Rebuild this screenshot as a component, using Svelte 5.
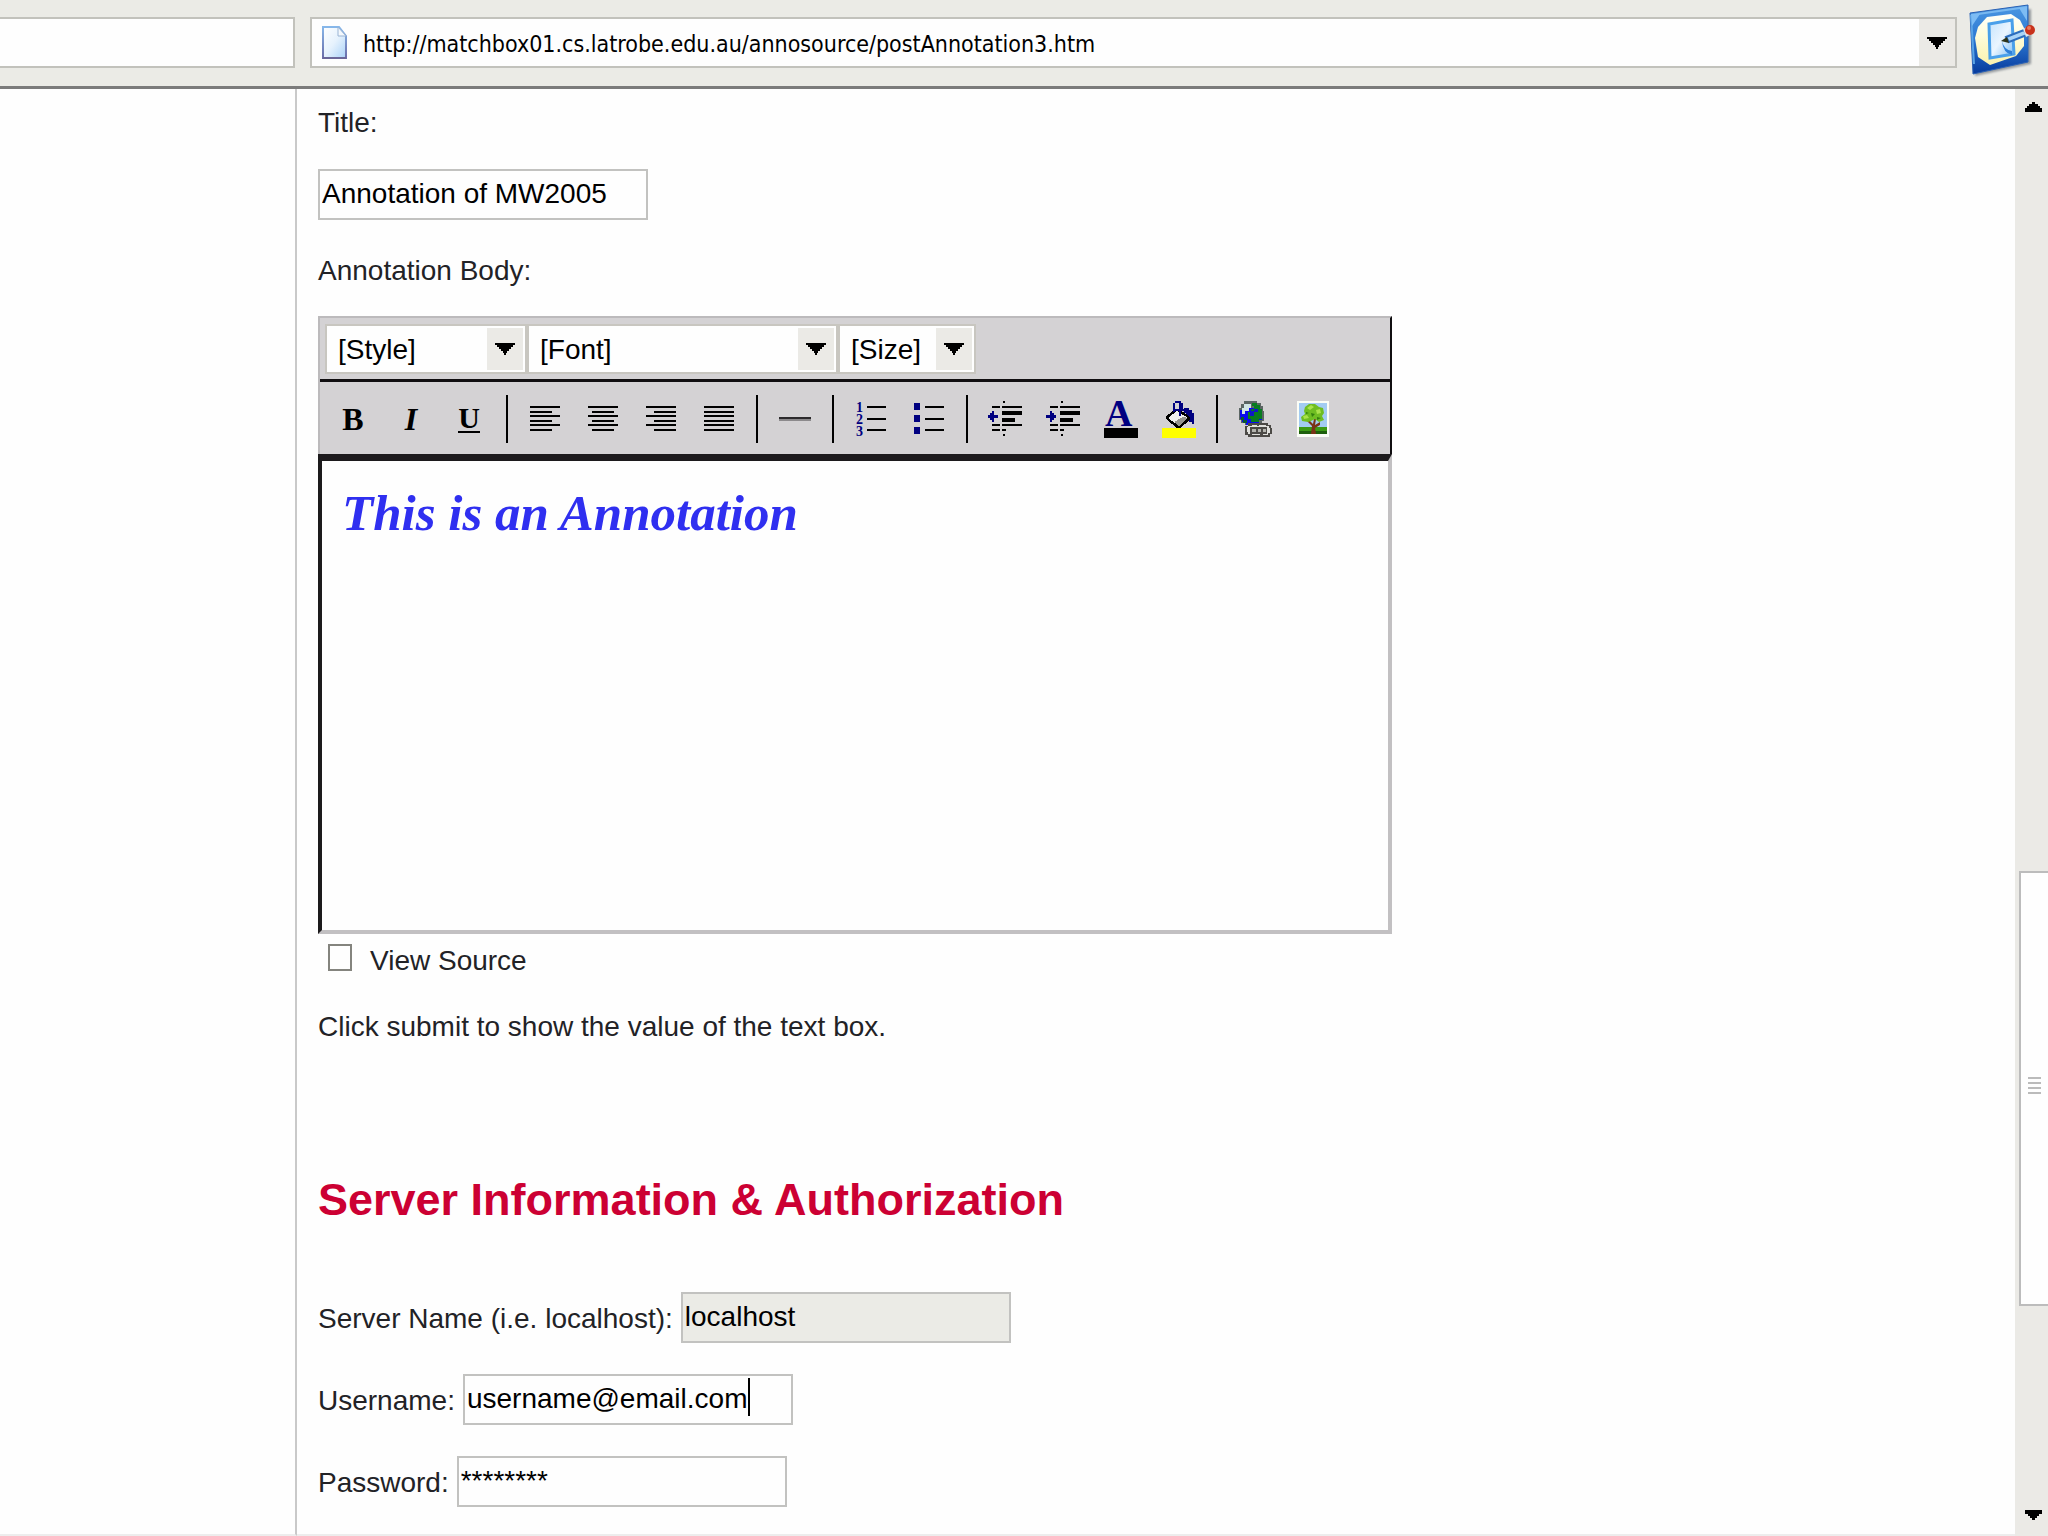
<script>
  let address = $state('http://matchbox01.cs.latrobe.edu.au/annosource/postAnnotation3.htm');
  let title = $state('Annotation of MW2005');
  let server = $state('localhost');
  let username = $state('username@email.com');
  let password = $state('********');
  let viewSource = $state(false);

  const lines = [0, 5, 9, 14, 18, 23];
</script>

{#snippet paragraphIcon(kind)}
  <svg width="30" height="26" viewBox="0 0 30 26" shape-rendering="crispEdges" aria-hidden="true">
    {#each lines as y, i}
      {@const w = kind === 'justify' || i % 2 === 0 ? 30 : 22}
      <rect x={kind === 'left' || w === 30 ? 0 : kind === 'center' ? 4 : 8} {y} width={w} height="2" />
    {/each}
  </svg>
{/snippet}

{#snippet dentIcon(kind)}
  <svg width="36" height="36" viewBox="0 0 36 36" shape-rendering="crispEdges" aria-hidden="true">
    <path d="M16 0h2v2h-2zM5 5h8v2H5zM15 5h20v2H15zM15 10h20v4H15zM15 17h13v4H15zM5 23h8v2H5zM15 23h20v2H15zM5 28h8v2H5zM15 28h4v2h-4zM16 33h2v2h-2z" />
    {#if kind === 'out'}
      <path fill="#000080" d="M1 14h2v-2h2v-2h2v4h4v3H7v4H5v-2H3v-2H1z" />
    {:else}
      <path fill="#000080" d="M11 14H9v-2H7v-2H5v4H1v3h4v4h2v-2h2v-2h2z" />
    {/if}
  </svg>
{/snippet}

{#snippet arrow()}
  <svg width="20" height="12" viewBox="0 0 20 12" shape-rendering="crispEdges" aria-hidden="true">
    <path d="M0 0h20v2h-2v2h-2v2h-2v2h-2v2h-1v2H9v-2H8V8H6V6H4V4H2V2H0z" />
  </svg>
{/snippet}

<div class="window">
  <header class="bar">
    <div class="stub"></div>
    <div class="address">
      <svg class="page-icon" width="26" height="34" viewBox="0 0 26 34" aria-hidden="true">
        <defs>
          <linearGradient id="sheet" x1="0" y1="0" x2="1" y2="1">
            <stop offset="0" stop-color="#fff" />
            <stop offset=".5" stop-color="#e6f2fd" />
            <stop offset="1" stop-color="#a9d2f8" />
          </linearGradient>
          <linearGradient id="edge" x1="0" y1="0" x2="0" y2="1">
            <stop offset="0" stop-color="#86b7ea" />
            <stop offset="1" stop-color="#6a6ca8" />
          </linearGradient>
        </defs>
        <path d="M1 1h16l7 9v22H1z" fill="url(#sheet)" stroke="url(#edge)" stroke-width="2" />
        <path d="M16 1v9h8z" fill="#f4f8fc" stroke="#9ab4d4" />
        <path d="M1 32h23" stroke="#6b6799" stroke-width="2" />
      </svg>
      <input class="url" type="text" aria-label="Address" bind:value={address} />
      <button class="drop" aria-label="Show addresses">{@render arrow()}</button>
    </div>
    <button class="annotate" aria-label="Annotate">
      <svg width="68" height="74" viewBox="0 0 68 74" aria-hidden="true">
        <defs>
          <linearGradient id="frame" x1="0" y1="0" x2="0" y2="1">
            <stop offset="0" stop-color="#4b97e2" />
            <stop offset=".5" stop-color="#2c78d2" />
            <stop offset="1" stop-color="#063a9c" />
          </linearGradient>
          <linearGradient id="disc" x1="0" y1="0" x2="0" y2="1">
            <stop offset="0" stop-color="#fffffa" />
            <stop offset=".4" stop-color="#fffcdc" />
            <stop offset="1" stop-color="#fbf2ae" />
          </linearGradient>
          <linearGradient id="note" x1="0" y1="0" x2="1" y2="1">
            <stop offset="0" stop-color="#c4e3fc" />
            <stop offset=".5" stop-color="#eaf5ff" />
            <stop offset="1" stop-color="#7dbdf3" />
          </linearGradient>
          <filter id="soft" x="-10%" y="-10%" width="120%" height="120%">
            <feGaussianBlur stdDeviation="1" />
          </filter>
        </defs>
        <path d="M6 13 62 5v55L6 72z" fill="#6d757e" opacity=".7" filter="url(#soft)" />
        <path d="M1 9 59 1v57L4 70z" fill="url(#frame)" stroke="#2b62b4" />
        <path d="M2 11 58 3" stroke="#79b8f0" stroke-width="2" />
        <path d="M2 11 5 60" stroke="#5aa4e6" stroke-width="2" />
        <path d="M50 4 58 3v14z" fill="#7dbcf4" />
        <path d="M2 10h9l-8 12z" fill="#7dbcf4" />
        <path d="M18 13 42 10 51 16 55 24 55 42 47 52 21 61 9 53 6 34 9 23z" fill="url(#disc)" />
        <path d="M20 20 43 16 45 50 21 54z" fill="url(#note)" stroke="#4aa0ea" stroke-width="3" />
        <path d="M33 37q2 9 10 10v4q-9-2-10-14z" fill="#2f80d8" />
        <path d="M37 33 55 26 58 31 40 38z" fill="#a9d4f8" stroke="#2c6dbd" stroke-width="2" />
        <path d="m32 37 6-4 2 6z" fill="#2d3318" />
        <path d="m54 25 4-2 3 8-4 2z" fill="#e0e4ea" />
        <circle cx="61" cy="26" r="5" fill="#c8321c" />
        <circle cx="60" cy="24" r="2" fill="#ee7a5c" />
      </svg>
    </button>
  </header>

  <div class="view">
    <aside class="side"></aside>
    <main class="content">
      <label class="line" for="title">Title:</label>
      <input class="field" id="title" type="text" bind:value={title} />
      <p class="line body-label" id="body-label">Annotation Body:</p>

      <div class="editor">
        <div class="tools">
          <div class="selects">
            <div class="select style">
              <select aria-label="Style"><option>[Style]</option></select>
              <span class="drop">{@render arrow()}</span>
            </div>
            <div class="select font">
              <select aria-label="Font"><option>[Font]</option></select>
              <span class="drop">{@render arrow()}</span>
            </div>
            <div class="select size">
              <select aria-label="Size"><option>[Size]</option></select>
              <span class="drop">{@render arrow()}</span>
            </div>
          </div>
          <div class="buttons">
            <button class="tool letter" aria-label="Bold">B</button>
            <button class="tool letter italic" aria-label="Italic">I</button>
            <button class="tool letter" aria-label="Underline"><span class="under">U</span></button>
            <span class="sep"></span>
            <button class="tool" aria-label="Align left">{@render paragraphIcon('left')}</button>
            <button class="tool" aria-label="Align center">{@render paragraphIcon('center')}</button>
            <button class="tool" aria-label="Align right">{@render paragraphIcon('right')}</button>
            <button class="tool" aria-label="Justify">{@render paragraphIcon('justify')}</button>
            <span class="sep"></span>
            <button class="tool" aria-label="Horizontal rule">
              <svg width="32" height="4" viewBox="0 0 32 4" shape-rendering="crispEdges" aria-hidden="true">
                <rect width="32" height="4" fill="#8c8a8c" />
                <rect width="32" height="2" fill="#2c2a2c" />
              </svg>
            </button>
            <span class="sep"></span>
            <button class="tool" aria-label="Numbered list">
              <svg width="32" height="36" viewBox="0 0 32 36" aria-hidden="true">
                <g class="digits">
                  <text x="1" y="11">1</text>
                  <text x="1" y="23">2</text>
                  <text x="1" y="35">3</text>
                </g>
                <path shape-rendering="crispEdges" d="M12 5h19v2H12zM12 17h19v2H12zM12 28h19v2H12z" />
              </svg>
            </button>
            <button class="tool" aria-label="Bulleted list">
              <svg width="30" height="32" viewBox="0 0 30 32" shape-rendering="crispEdges" aria-hidden="true">
                <path fill="#000080" d="M0 0h6v7H0zM0 12h6v7H0zM0 24h6v7H0z" />
                <path d="M11 3h19v2H11zM11 15h19v2H11zM11 26h19v2H11z" />
              </svg>
            </button>
            <span class="sep"></span>
            <button class="tool" aria-label="Decrease indent">{@render dentIcon('out')}</button>
            <button class="tool" aria-label="Increase indent">{@render dentIcon('in')}</button>
            <button class="tool" aria-label="Text color">
              <svg width="34" height="38" viewBox="0 0 34 38" aria-hidden="true">
                <text class="swatch-letter" x="1" y="26">A</text>
                <rect y="28" width="34" height="10" />
              </svg>
            </button>
            <button class="tool" aria-label="Background color">
              <svg width="36" height="38" viewBox="0 0 36 38" shape-rendering="crispEdges" aria-hidden="true">
                <rect x="1" y="28" width="34" height="10" fill="#ff0" />
                <path d="M23 8h5v2h3v3h2v11h-2v-2h-3v-5h-3v-4h-2z" fill="#000080" />
                <path d="M15 9h3l11 8v3L19 28h-3L5 19v-3z" fill="#000" />
                <path d="m16 11 11 7-9 8-11-8z" fill="#f0f0ee" />
                <path d="m27 18-9 8-5-4 9-5z" fill="#94948e" />
                <path d="M12 12V3h2V1h6v2h2v6h2v2h-4v5h-2v-5h-4V9h4V3h-4v9z" fill="#000080" />
              </svg>
            </button>
            <span class="sep"></span>
            <button class="tool" aria-label="Insert link">
              <svg width="36" height="38" viewBox="0 0 36 38" shape-rendering="crispEdges" aria-hidden="true">
                <path d="M7 1h13v2h4v3h2v5h1v10h-2v4H8v-2H4v-3H2V8h2V4h3z" fill="#5c6664" />
                <path d="M7 4h7v4h6v4h5v8h-3v5H9v-3H5v-3H3v-9h4z" fill="#0a0af0" />
                <path d="M15 3h5v2h3v4h2v10h-3v3h-8v-3h-3v-7h3V9h3V6h-2z" fill="#087c20" />
                <path d="M7 4h7v4h-2v3H8v3H5V8h2z" fill="#d2e6e6" />
                <path d="M13 11h4V9h4v3h-4v4h-4z" fill="#1018c8" />
                <path d="M4 17h3v3h3v3H6v-3H4z" fill="#0a5a30" />
                <path d="M11 23h20v2h3v3h1v6h-2v3H11v-2H8v-9h3z" fill="#4c4a46" />
                <path d="M11 26h4v-1h5v1h2v-1h7v1h3v2h1v5h-2v2h-5v-1h-3v1h-8v-1h-4v-2h-1v-5h1z" fill="#e0e0dc" />
                <path d="M13 27h17v7H13z" fill="#4c4a46" />
                <path d="M15 29h4v3h-4zM21 29h3v3h-3zM26 29h3v3h-3z" fill="#b4b4ae" />
              </svg>
            </button>
            <button class="tool" aria-label="Insert image">
              <svg width="32" height="36" viewBox="0 0 32 36" aria-hidden="true">
                <rect width="32" height="36" fill="#fbfdf6" />
                <rect x="2" y="2" width="28" height="25" fill="#a3ccf2" />
                <rect x="2" y="26" width="28" height="7" fill="#3c9a14" />
                <rect x="2" y="30" width="28" height="3" fill="#1d5f0c" />
                <path d="m14 33 1-8-5-5h3l3 3 1-5h2l-1 6 5-3v3l-5 3 1 6z" fill="#7a3216" />
                <path d="M8 6l4-3h6l4 3 4 1 1 5-2 3 2 4-5 2-4-3-4 2-3 1-6-1-1-4 4-3-1-3z" fill="#6fbe22" />
                <path d="m10 7 4-3 3 2-4 3zM19 9l4-1 1 4-4 1zM6 15l4-1 2 3-5 1z" fill="#a9e24c" />
                <path d="m14 12 4 1-3 3zM20 16l4 1-4 2zM9 11l3 1-3 1z" fill="#33800f" />
              </svg>
            </button>
          </div>
        </div>
        <div class="area" contenteditable="true" role="textbox" tabindex="0" aria-labelledby="body-label">This is an Annotation</div>
      </div>

      <label class="line check">
        <input type="checkbox" bind:checked={viewSource} />
        View Source
      </label>
      <p class="line">Click submit to show the value of the text box.</p>

      <h2>Server Information &amp; Authorization</h2>

      <form class="rows">
        <div class="row">
          <label class="line" for="server">Server Name (i.e. localhost):</label>
          <input class="field muted" id="server" type="text" bind:value={server} />
        </div>
        <div class="row">
          <label class="line" for="username">Username:</label>
          <span class="with-caret">
            <input class="field" id="username" type="text" bind:value={username} />
            <span class="caret"></span>
          </span>
        </div>
        <div class="row">
          <label class="line" for="password">Password:</label>
          <input class="field" id="password" type="text" bind:value={password} />
        </div>
      </form>
    </main>

    <div class="scroll">
      <button class="step" aria-label="Scroll up">
        <svg width="17" height="10" viewBox="0 0 17 10" shape-rendering="crispEdges" aria-hidden="true">
          <path d="M7 0h3v2h3v2h2v2h2v4H0V6h2V4h2V2h3z" />
        </svg>
      </button>
      <div class="track">
        <div class="before"></div>
        <div class="thumb">
          <svg width="13" height="18" viewBox="0 0 13 18" shape-rendering="crispEdges" aria-hidden="true">
            <path fill="#bbb" d="M0 0h13v2H0zM0 5h13v2H0zM0 10h13v2H0zM0 15h13v2H0z" />
          </svg>
        </div>
        <div class="after"></div>
      </div>
      <button class="step down" aria-label="Scroll down">
        <svg width="17" height="10" viewBox="0 0 17 10" shape-rendering="crispEdges" aria-hidden="true">
          <path d="M0 0h17v4h-3v2h-2v2h-2v2H7V8H5V6H3V4H0z" />
        </svg>
      </button>
    </div>
  </div>
</div>

<style>
  :global(body) {
    background: #fefefe;
  }
  * {
    box-sizing: border-box;
  }
  svg {
    display: block;
    flex: none;
  }
  button {
    padding: 0;
    border: 0;
    background: none;
    color: #000;
  }
  .window {
    display: flex;
    flex-direction: column;
    min-height: 100vh;
    font: 28px/38px 'Liberation Sans', Arial, sans-serif;
    color: #222226;
  }
  .bar {
    display: flex;
    align-items: flex-start;
    height: 89px;
    background: #ebebe6;
    border-bottom: 3px solid #7b7b7b;
  }
  .stub,
  .address {
    height: 51px;
    margin-top: 17px;
    background: #fefefe;
    border: 2px solid #c2c2bc;
  }
  .stub {
    flex: none;
    width: 295px;
    border-left: 0;
    margin-right: 15px;
  }
  .address {
    display: flex;
    flex: 1;
    align-items: center;
    padding-left: 10px;
  }
  .url {
    flex: 1;
    min-width: 0;
    height: 44px;
    margin-left: 15px;
    padding: 2px 0 0;
    border: 0;
    outline: 0;
    background: none;
    color: #000;
    font: 23px/32px 'DejaVu Sans Condensed', 'DejaVu Sans', sans-serif;
  }
  .drop {
    display: flex;
    align-items: center;
    justify-content: center;
    width: 36px;
    height: 100%;
    background: #ebeae6;
  }
  .annotate {
    margin: 4px 11px 0 12px;
  }
  .view {
    display: flex;
    flex: 1;
  }
  .side {
    flex: none;
    width: 297px;
    border-right: 2px solid #c9c9c9;
    border-bottom: 2px solid #ededed;
  }
  .content {
    flex: 1;
    padding: 13px 21px 24px;
    border-bottom: 2px solid #ededed;
  }
  .line {
    display: block;
    margin: 0;
    padding-top: 2px;
  }
  .field {
    display: block;
    width: 330px;
    height: 51px;
    padding: 0 0 2px 2px;
    border: 2px solid #c2c2c0;
    border-radius: 0;
    outline: 0;
    background: #fefefe;
    color: #000;
    font: inherit;
  }
  #title {
    margin: 27px 0 30px;
  }
  .muted {
    background: #ebebe6;
  }
  .body-label {
    margin-bottom: 26px;
  }
  .editor {
    width: 1074px;
    max-width: 100%;
  }
  .tools {
    background: #d4d2d4;
    border: 2px solid #bcbabc;
    border-right: 2px solid #100e10;
    border-bottom: 0;
  }
  .selects {
    display: flex;
    height: 64px;
    padding: 6px 5px;
    border-bottom: 3px solid #100e10;
  }
  .select {
    position: relative;
    height: 50px;
    border: 2px solid #c8c6c0;
    background: #fefefe;
  }
  .select select {
    width: 100%;
    height: 100%;
    padding: 2px 0 0 11px;
    border: 0;
    outline: 0;
    appearance: none;
    background: none;
    color: #000;
    font: inherit;
  }
  .select .drop {
    position: absolute;
    top: 2px;
    right: 2px;
    bottom: 2px;
    height: auto;
    pointer-events: none;
  }
  .style {
    width: 202px;
  }
  .font {
    width: 311px;
  }
  .size {
    width: 138px;
  }
  .buttons {
    display: flex;
    align-items: center;
    height: 72px;
    padding: 2px 0 0 4px;
  }
  .tool {
    display: flex;
    align-items: center;
    justify-content: center;
    width: 58px;
    height: 58px;
  }
  .letter {
    font: bold 32px/32px 'Liberation Serif', serif;
  }
  .italic {
    font-style: italic;
  }
  .under {
    height: 28px;
    border-bottom: 2px solid #000;
    font-size: 30px;
    line-height: 26px;
  }
  .sep {
    width: 2px;
    height: 48px;
    margin: 0 8px;
    background: #000;
  }
  .digits {
    fill: #000080;
    font: bold 14px 'Liberation Serif', serif;
  }
  .swatch-letter {
    fill: #000080;
    font: bold 38px 'Liberation Serif', serif;
  }
  .area {
    height: 480px;
    padding: 22px 20px;
    border: 4px solid #1c1a1c;
    border-top-width: 7px;
    border-right-color: #c2c0c2;
    border-bottom-color: #c2c0c2;
    outline: 0;
    color: #2f2ff0;
    font: italic bold 51px/60px 'Liberation Serif', serif;
  }
  .check {
    display: flex;
    align-items: center;
    gap: 18px;
    margin: 6px 0 26px 10px;
  }
  .check input {
    appearance: none;
    width: 24px;
    height: 27px;
    margin: 0 0 8px;
    border: 2px solid #84847e;
    background: #fefefe;
  }
  h2 {
    margin: 124px 0 62px;
    color: #cc0033;
    font-size: 45px;
    line-height: 60px;
  }
  .rows {
    display: flex;
    flex-direction: column;
    gap: 31px;
  }
  .row {
    display: flex;
    align-items: center;
    gap: 8px;
  }
  .with-caret {
    position: relative;
  }
  .caret {
    position: absolute;
    top: 4px;
    left: 285px;
    width: 2px;
    height: 38px;
    background: #000;
  }
  .scroll {
    display: flex;
    flex: none;
    flex-direction: column;
    width: 33px;
    background: #ebeae6;
  }
  .step {
    display: flex;
    justify-content: center;
    align-items: center;
    height: 36px;
    padding-left: 3px;
  }
  .down {
    padding-bottom: 6px;
  }
  .track {
    display: flex;
    flex: 1;
    flex-direction: column;
  }
  .before {
    flex: 751;
  }
  .thumb {
    display: flex;
    align-items: center;
    justify-content: center;
    flex: 431;
    margin-left: 4px;
    padding-bottom: 4px;
    border: 2px solid #bcbcbc;
    border-right: 0;
    background: #fefefe;
  }
  .after {
    flex: 195;
  }
</style>
